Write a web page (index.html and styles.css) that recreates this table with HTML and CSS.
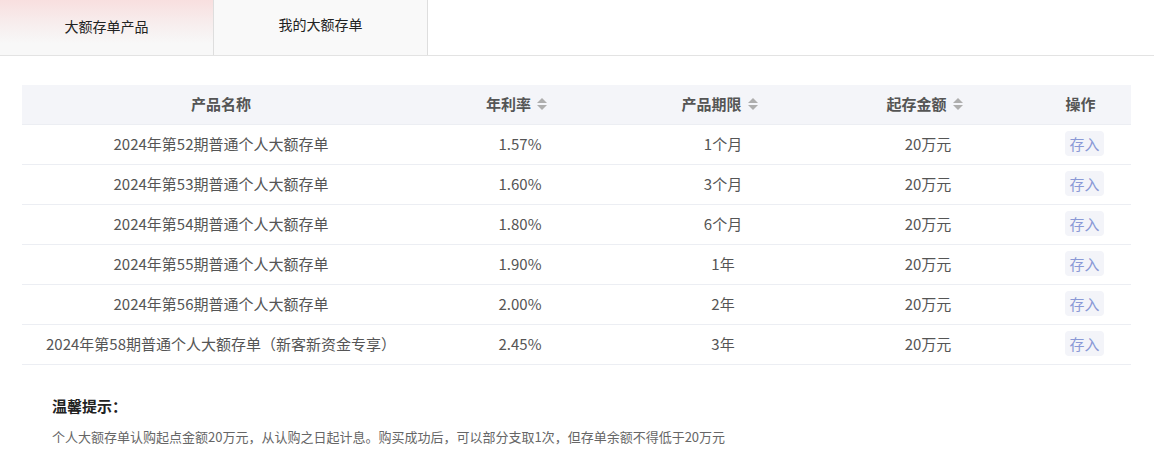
FILE: index.html
```html
<!DOCTYPE html>
<html lang="zh-CN">
<head>
<meta charset="utf-8">
<link rel="stylesheet" href="styles.css">
</head>
<body>
<div class="tabs">
  <div class="tab tab-active">大额存单产品</div>
  <div class="tab">我的大额存单</div>
</div>
<div class="content">
  <table class="grid">
    <colgroup>
      <col class="c1"><col class="c2"><col class="c3"><col class="c4"><col class="c5">
    </colgroup>
    <thead>
      <tr>
        <th>产品名称</th>
        <th>年利率<span class="sort"><i class="up"></i><i class="down"></i></span></th>
        <th>产品期限<span class="sort"><i class="up"></i><i class="down"></i></span></th>
        <th>起存金额<span class="sort"><i class="up"></i><i class="down"></i></span></th>
        <th>操作</th>
      </tr>
    </thead>
    <tbody>
      <tr><td>2024年第52期普通个人大额存单</td><td>1.57%</td><td>1个月</td><td>20万元</td><td><span class="btn">存入</span></td></tr>
      <tr><td>2024年第53期普通个人大额存单</td><td>1.60%</td><td>3个月</td><td>20万元</td><td><span class="btn">存入</span></td></tr>
      <tr><td>2024年第54期普通个人大额存单</td><td>1.80%</td><td>6个月</td><td>20万元</td><td><span class="btn">存入</span></td></tr>
      <tr><td>2024年第55期普通个人大额存单</td><td>1.90%</td><td>1年</td><td>20万元</td><td><span class="btn">存入</span></td></tr>
      <tr><td>2024年第56期普通个人大额存单</td><td>2.00%</td><td>2年</td><td>20万元</td><td><span class="btn">存入</span></td></tr>
      <tr><td>2024年第58期普通个人大额存单（新客新资金专享）</td><td>2.45%</td><td>3年</td><td>20万元</td><td><span class="btn">存入</span></td></tr>
    </tbody>
  </table>
  <div class="tips">
    <div class="tips-title">温馨提示：</div>
    <p class="tips-text">个人大额存单认购起点金额20万元，从认购之日起计息。购买成功后，可以部分支取1次，但存单余额不得低于20万元</p>
  </div>
</div>
</body>
</html>
```
FILE: styles.css
```css
* { box-sizing: border-box; }
html, body { margin: 0; padding: 0; background: #fff; }
body {
  font-family: "Noto Sans CJK SC", "Liberation Sans", sans-serif;
  color: #555;
  width: 1154px;
}
.tabs {
  display: flex;
  height: 56px;
  border-bottom: 1px solid #e3e3e3;
}
.tab {
  width: 214px;
  height: 55px;
  border-right: 1px solid #dedede;
  background: #f9f9f9;
  font-size: 14px;
  color: #222;
  display: flex;
  align-items: center;
  justify-content: center;
  padding-bottom: 8px;
}
.tab-active {
  background: linear-gradient(to bottom, #f8dfdf 0%, #f7eeee 45%, #f8f8f8 80%, #f8f8f8 100%);
  padding-bottom: 3px;
}
.content {
  padding: 29px 23px 0 22px;
}
.grid {
  width: 1109px;
  border-collapse: collapse;
  table-layout: fixed;
}
.c1 { width: 398px; }
.c2 { width: 200px; }
.c3 { width: 206px; }
.c4 { width: 204px; }
.c5 { width: 101px; }
.grid th {
  background: #f4f5f9;
  height: 39px;
  font-size: 15px;
  font-weight: bold;
  color: #555;
  text-align: center;
  padding: 0 0 1px;
  border-bottom: 1px solid #eceef3;
}
.grid td {
  height: 40px;
  font-size: 15px;
  color: #555;
  text-align: center;
  padding: 0 0 1px;
  border-bottom: 1px solid #eceef3;
}
.sort {
  display: inline-flex;
  flex-direction: column;
  gap: 2px;
  margin-left: 6px;
  margin-right: 7px;
  vertical-align: middle;
  position: relative;
  top: -2px;
}
.sort i {
  display: block;
  width: 0;
  height: 0;
  border-left: 5px solid transparent;
  border-right: 5px solid transparent;
}
.sort .up { border-bottom: 5px solid #aeaeae; }
.sort .down { border-top: 5px solid #aeaeae; }
.btn {
  display: inline-block;
  background: #f3f4f9;
  color: #8a99d6;
  font-size: 15px;
  line-height: 25px;
  padding: 0 4px;
  border-radius: 4px;
  margin-left: 8px;
}
.tips {
  padding: 31px 0 0 30px;
}
.tips-title {
  font-size: 15px;
  font-weight: bold;
  color: #222;
  line-height: 20px;
}
.tips-text {
  margin: 11px 0 0;
  font-size: 13px;
  color: #666;
  line-height: 20px;
}
```
